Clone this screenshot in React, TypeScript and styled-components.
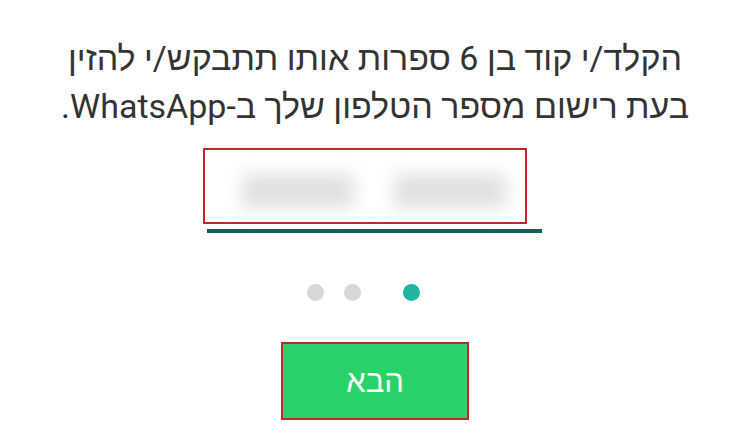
import React from 'react';
import styled, { createGlobalStyle } from 'styled-components';

const GlobalStyle = createGlobalStyle`
  html, body {
    margin: 0;
    padding: 0;
    background: #ffffff;
  }
  body {
    font-family: Roboto, "Liberation Sans", "DejaVu Sans", sans-serif;
  }
`;

const Screen = styled.div`
  width: 750px;
  height: 448px;
  display: flex;
  flex-direction: column;
  align-items: center;
  padding-top: 34px;
  box-sizing: border-box;
  direction: rtl;
  overflow: hidden;
`;

const Instructions = styled.p`
  margin: 0;
  font-size: 34px;
  line-height: 48px;
  color: #333333;
  text-align: center;
`;

const CodeField = styled.div`
  position: relative;
  margin-top: 18px;
  width: 335px;
  height: 81px;
  border-bottom: 4px solid #14605a;
  display: flex;
  align-items: center;
  justify-content: center;
  gap: 40px;
  direction: ltr;
  margin-right: 2px;
`;

const BlurredGroup = styled.div`
  width: 112px;
  height: 34px;
  background: #e0e0e0;
  filter: blur(9px);
  margin-top: 4px;
`;

const Highlight = styled.div<{ $inset: string }>`
  position: absolute;
  inset: ${(p) => p.$inset};
  border: 2.5px solid #c4262a;
  pointer-events: none;
`;

const Pager = styled.div`
  margin-top: 51px;
  margin-right: 24px;
  display: flex;
  align-items: center;
  gap: 20px;
  direction: ltr;
`;

const Dot = styled.span<{ $active?: boolean; $gap?: number }>`
  width: 17px;
  height: 17px;
  border-radius: 50%;
  background: ${(p) => (p.$active ? '#1fb59e' : '#d7d7d7')};
  margin-left: ${(p) => p.$gap ?? 0}px;
`;

const NextButton = styled.button`
  position: relative;
  margin-top: 41px;
  width: 188px;
  height: 78px;
  border: none;
  background: #27d268;
  color: #ffffff;
  font-family: Roboto, "Liberation Sans", "DejaVu Sans", sans-serif;
  font-size: 31px;
  padding: 0;
  cursor: pointer;
`;

export default function App() {
  return (
    <>
      <GlobalStyle />
      <Screen>
        <Instructions>
          הקלד/י קוד בן 6 ספרות אותו תתבקש/י להזין
          <br />
          בעת רישום מספר הטלפון שלך ב-WhatsApp.
        </Instructions>
        <CodeField>
          <BlurredGroup />
          <BlurredGroup />
          <Highlight $inset="0 15px 5px -4px" />
        </CodeField>
        <Pager>
          <Dot />
          <Dot />
          <Dot $active $gap={22} />
        </Pager>
        <NextButton>
          הבא
          <Highlight $inset="0" />
        </NextButton>
      </Screen>
    </>
  );
}
